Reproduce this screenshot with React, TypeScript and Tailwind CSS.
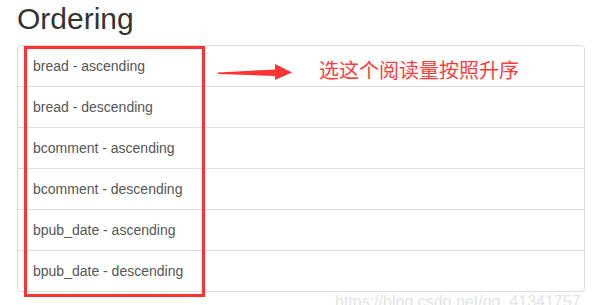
const orderings = [
  "bread - ascending",
  "bread - descending",
  "bcomment - ascending",
  "bcomment - descending",
  "bpub_date - ascending",
  "bpub_date - descending",
];

export default function App() {
  return (
    <div className="relative h-[305px] w-[609px] overflow-hidden bg-white pl-[17px] pt-[2px] font-['Liberation_Sans',Arial,sans-serif]">
      <h2 className="mb-[10px] text-[30px] leading-[33px] text-[#333]">Ordering</h2>

      {/* list group */}
      <div className="w-[568px] divide-y divide-[#ddd] rounded border border-[#ddd]">
        {orderings.map((item) => (
          <div key={item} className="px-[15px] py-[10px] text-[14px] leading-5 text-[#555]">
            {item}
          </div>
        ))}
      </div>

      {/* annotation overlay */}
      <div className="pointer-events-none absolute left-[24px] top-[46px] h-[251px] w-[181px] border-[3px] border-[#ff3333]" />
      <svg className="pointer-events-none absolute left-0 top-0" width="609" height="305">
        <polygon
          points="218,72.5 275,69.5 275,64 292,72.5 275,80 275,76 218,74"
          fill="#ff3333"
        />
      </svg>
      <div className="pointer-events-none absolute left-[319px] top-[58px] text-[20px] leading-[24px] text-[#ff3b3b] font-['Noto_Sans_CJK_SC',sans-serif]">
        选这个阅读量按照升序
      </div>

      {/* watermark */}
      <div className="pointer-events-none absolute left-[335px] top-[292px] text-[16px] leading-5 text-[#e3e3e3]">
        https://blog.csdn.net/qq_41341757
      </div>
    </div>
  );
}
